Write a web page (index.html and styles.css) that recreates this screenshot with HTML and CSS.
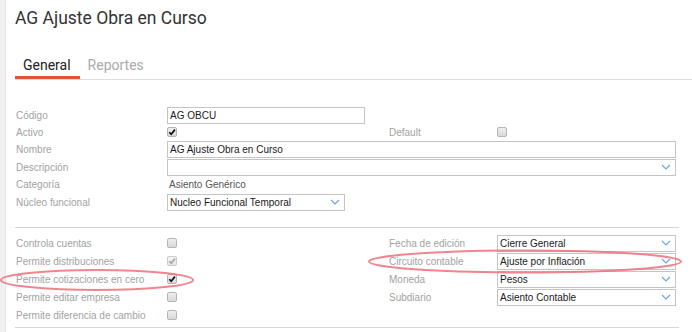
FILE: index.html
```html
<!DOCTYPE html>
<html lang="es">
<head>
    <meta charset="UTF-8">
    <title>AG Ajuste Obra en Curso</title>
    <link rel="stylesheet" href="styles.css">
</head>
<body>
    <div class="page">
        <div class="rail"></div>
        <div class="main">
            <h1>AG Ajuste Obra en Curso</h1>

            <ul class="tabs">
                <li><a href="#" class="active">General</a></li>
                <li><a href="#">Reportes</a></li>
            </ul>

            <div class="form">
                <div class="row">
                    <label>Código</label>
                    <input type="text" class="short" value="AG OBCU">
                </div>
                <div class="row small">
                    <label>Activo</label>
                    <span class="check on"><svg width="10" height="10" viewBox="0 0 10 10"><path d="M2.3 5.2 L4.2 7.3 L7.9 2.6" /></svg></span>
                    <label>Default</label>
                    <span class="check"></span>
                </div>
                <div class="row">
                    <label>Nombre</label>
                    <input type="text" class="wide" value="AG Ajuste Obra en Curso">
                </div>
                <div class="row">
                    <label>Descripción</label>
                    <div class="select wide"><span></span><svg width="10" height="6" viewBox="0 0 10 6"><path d="M1 1 L5 5 L9 1" /></svg></div>
                </div>
                <div class="row mid">
                    <label>Categoría</label>
                    <span class="value">Asiento Genérico</span>
                </div>
                <div class="row">
                    <label>Núcleo funcional</label>
                    <div class="select medium"><span>Nucleo Funcional Temporal</span><svg width="10" height="6" viewBox="0 0 10 6"><path d="M1 1 L5 5 L9 1" /></svg></div>
                </div>

                <div class="separator"></div>

                <div class="row">
                    <label>Controla cuentas</label>
                    <span class="check"></span>
                    <label>Fecha de edición</label>
                    <div class="select"><span>Cierre General</span><svg width="10" height="6" viewBox="0 0 10 6"><path d="M1 1 L5 5 L9 1" /></svg></div>
                </div>
                <div class="row">
                    <label>Permite distribuciones</label>
                    <span class="check on disabled"><svg width="10" height="10" viewBox="0 0 10 10"><path d="M2.3 5.2 L4.2 7.3 L7.9 2.6" /></svg></span>
                    <label>Circuito contable</label>
                    <div class="select"><span>Ajuste por Inflación</span><svg width="10" height="6" viewBox="0 0 10 6"><path d="M1 1 L5 5 L9 1" /></svg></div>
                </div>
                <div class="row">
                    <label>Permite cotizaciones en cero</label>
                    <span class="check on"><svg width="10" height="10" viewBox="0 0 10 10"><path d="M2.3 5.2 L4.2 7.3 L7.9 2.6" /></svg></span>
                    <label>Moneda</label>
                    <div class="select"><span>Pesos</span><svg width="10" height="6" viewBox="0 0 10 6"><path d="M1 1 L5 5 L9 1" /></svg></div>
                </div>
                <div class="row">
                    <label>Permite editar empresa</label>
                    <span class="check"></span>
                    <label>Subdiario</label>
                    <div class="select"><span>Asiento Contable</span><svg width="10" height="6" viewBox="0 0 10 6"><path d="M1 1 L5 5 L9 1" /></svg></div>
                </div>
                <div class="row">
                    <label>Permite diferencia de cambio</label>
                    <span class="check"></span>
                </div>

                <div class="separator bottom"></div>
            </div>
        </div>
    </div>

    <!-- marcas de revision -->
    <svg class="marks" width="692" height="332" viewBox="0 0 692 332">
        <ellipse cx="97" cy="280" rx="96" ry="10" />
        <ellipse cx="525" cy="261.5" rx="156" ry="11" />
    </svg>
</body>
</html>
```

FILE: styles.css
```css
body {
    margin: 0;
    padding: 0;
    background-color: #ffffff;
    font-family: 'Liberation Sans', Arial, sans-serif;
    overflow: hidden;
}

.page {
    display: flex;
    min-height: 332px;
}

.rail {
    width: 5px;
    flex-shrink: 0;
    background-color: #f1f1f1;
    border-right: 1px solid #e8e8e8;
}

.main {
    flex: 1;
    padding-left: 9px;
}

h1 {
    margin: 0;
    padding-top: 7px;
    font-family: Roboto, 'Liberation Sans', sans-serif;
    font-weight: normal;
    font-size: 17.5px;
    line-height: 22px;
    color: #333333;
}

.tabs {
    list-style-type: none;
    margin: 28px 0 0 0;
    padding: 0;
    display: flex;
    border-bottom: 1px solid #dddddd;
}

.tabs li a {
    display: block;
    padding: 0 9px 3px 8px;
    font-family: Roboto, 'Liberation Sans', sans-serif;
    font-size: 14px;
    line-height: 16px;
    color: #aaaaaa;
    text-decoration: none;
    border-bottom: 3px solid transparent;
}

.tabs li a.active {
    color: #222222;
    border-bottom-color: #e2513a;
}

.form {
    width: 664px;
    margin-top: 26px;
}

.row {
    display: grid;
    grid-template-columns: 152px 221px 109px 179px;
    align-items: center;
    height: 18px;
}

.row.small {
    height: 16px;
}

.row.mid {
    height: 17px;
}

.row label {
    padding-left: 1px;
    font-size: 10px;
    color: #a2a2a2;
    white-space: nowrap;
}

input,
.select {
    box-sizing: border-box;
    height: 17px;
    margin: 0;
    padding: 0 2px;
    border: 1px solid #c4c4c4;
    border-radius: 0;
    background-color: #ffffff;
    font-family: 'Liberation Sans', Arial, sans-serif;
    font-size: 10px;
    color: #1a1a1a;
    outline: none;
}

.short {
    width: 198px;
}

.wide {
    grid-column: 2 / 5;
}

.medium {
    width: 178px;
}

.select {
    display: flex;
    align-items: center;
    justify-content: space-between;
    padding-right: 4px;
}

.select span {
    white-space: nowrap;
}

.select svg path {
    fill: none;
    stroke: #6aa3e6;
    stroke-width: 1.1;
}

.value {
    padding-left: 2px;
    font-size: 10px;
    color: #555555;
}

.check {
    box-sizing: border-box;
    width: 10px;
    height: 10px;
    border: 1px solid #b4b4b4;
    border-radius: 2px;
    background: linear-gradient(#eeeeee, #d9d9d9);
    display: flex;
    align-items: center;
    justify-content: center;
}

.check svg {
    flex-shrink: 0;
}

.check svg path {
    fill: none;
    stroke: #111111;
    stroke-width: 1.7;
}

.check.disabled {
    border-color: #cccccc;
    background: linear-gradient(#f4f4f4, #e6e6e6);
}

.check.disabled svg path {
    stroke: #a8a8a8;
}

.separator {
    border-top: 1px solid #d6d6d6;
    margin: 16px 0 6px 0;
}

.separator.bottom {
    margin: 3px 0 0 0;
}

.marks {
    position: absolute;
    top: 0;
    left: 0;
    pointer-events: none;
}

.marks ellipse {
    fill: none;
    stroke: #ee6f78;
    stroke-width: 2;
    opacity: 0.85;
}
```
